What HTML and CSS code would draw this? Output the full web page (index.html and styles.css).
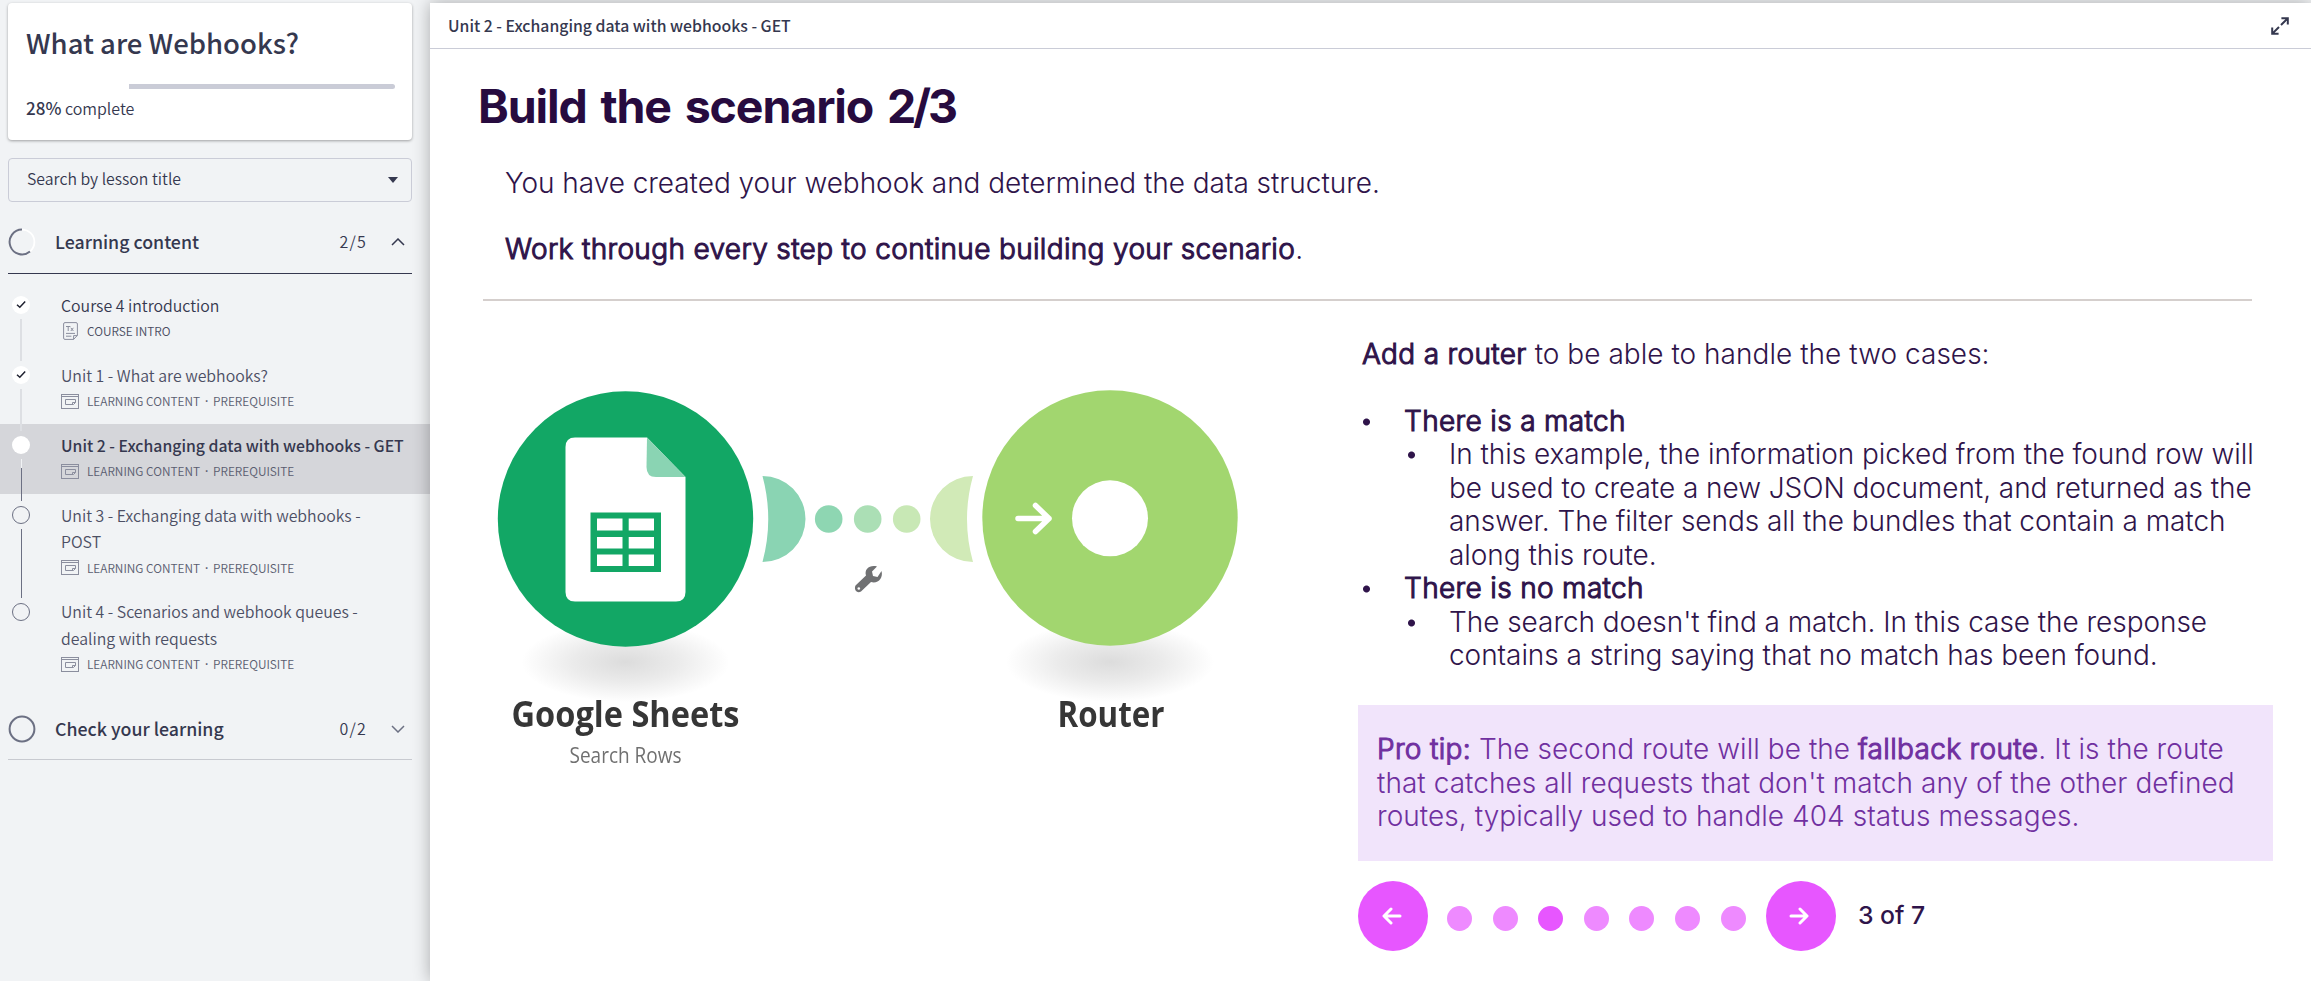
FILE: index.html
```html
<!DOCTYPE html>
<html lang="en">
<head>
<meta charset="utf-8">
<title>What are Webhooks?</title>
<link rel="stylesheet" href="styles.css">
</head>
<body>
<svg class="defs" width="0" height="0" aria-hidden="true">
  <symbol id="lesson" viewBox="0 0 18 15">
    <rect x=".5" y=".5" width="17" height="14" fill="none" stroke="currentColor"/>
    <path d="M.5 2.5H17.5" stroke="currentColor"/>
    <path d="M4.500 5.500H14.500V8.500L12.500 10.500H4.500Z" fill="none" stroke="currentColor"/>
    <path d="M11.500 10.500V8.500H14.500" fill="none" stroke="currentColor"/>
  </symbol>
  <symbol id="check" viewBox="0 0 18 18">
    <path d="M5 8.800L7.800 11.200L13.200 5.400" fill="none" stroke="#1f2130" stroke-width="1.5"/>
  </symbol>
</svg>
<div class="app">
  <aside class="sidebar">
    <section class="card">
      <h1 class="course">What are Webhooks?</h1>
      <div class="progress"><div class="rest"></div></div>
      <p class="pct"><b>28%</b> complete</p>
    </section>
    <div class="search"><span class="hint">Search by lesson title</span><i class="caret"></i></div>
    <div class="section open">
      <svg class="ring" viewBox="0 0 28 28"><circle cx="14" cy="14" r="12.4" fill="none" stroke="#fff" stroke-width="1.8"/><path d="M14 1.6A12.4 12.4 0 1 0 22 23.5" fill="none" stroke="#6c7083" stroke-width="2"/></svg>
      <span class="name">Learning content</span><span class="count">2/5</span>
      <svg class="chev" viewBox="0 0 14 8"><path d="M1 7L7 1L13 7" fill="none" stroke="#35384f" stroke-width="1.5"/></svg>
    </div>
    <ul class="lessons">
      <li class="lesson">
        <div class="rail"><svg class="dot done"><use href="#check"/></svg><i class="line light"></i></div>
        <div class="body"><div class="title dark">Course 4 introduction</div>
          <div class="meta dark"><svg class="doc" viewBox="0 0 15 18"><path d="M2 .6H13Q14.4 .6 14.4 2V13.4L10.6 17.4H2Q.6 17.4 .6 16V2Q.6 .6 2 .6Z M14.4 13.6H10.6V17.4 M3 11.4H12 M3 14.2H8.4 M3 4.5H7.4 M5.2 4.5V9 M7.8 5.8L10.4 9 M10.4 5.8L7.8 9" fill="none" stroke="currentColor" stroke-width="1"/></svg><span>COURSE INTRO</span></div></div>
      </li>
      <li class="lesson">
        <div class="rail"><svg class="dot done"><use href="#check"/></svg><i class="line light"></i></div>
        <div class="body"><div class="title">Unit 1 - What are webhooks?</div>
          <div class="meta"><svg class="ico"><use href="#lesson"/></svg><span>LEARNING CONTENT</span><span class="sep">·</span><span>PREREQUISITE</span></div></div>
      </li>
      <li class="lesson current">
        <div class="rail"><i class="dot done"></i><i class="line"></i></div>
        <div class="body"><div class="title">Unit 2 - Exchanging data with webhooks - GET</div>
          <div class="meta"><svg class="ico"><use href="#lesson"/></svg><span>LEARNING CONTENT</span><span class="sep">·</span><span>PREREQUISITE</span></div></div>
      </li>
      <li class="lesson long">
        <div class="rail"><i class="dot todo"></i><i class="line"></i></div>
        <div class="body"><div class="title">Unit 3 - Exchanging data with webhooks -<br>POST</div>
          <div class="meta"><svg class="ico"><use href="#lesson"/></svg><span>LEARNING CONTENT</span><span class="sep">·</span><span>PREREQUISITE</span></div></div>
      </li>
      <li class="lesson long">
        <div class="rail"><i class="dot todo"></i></div>
        <div class="body"><div class="title">Unit 4 - Scenarios and webhook queues -<br>dealing with requests</div>
          <div class="meta"><svg class="ico"><use href="#lesson"/></svg><span>LEARNING CONTENT</span><span class="sep">·</span><span>PREREQUISITE</span></div></div>
      </li>
    </ul>
    <div class="section closed">
      <svg class="ring" viewBox="0 0 28 28"><circle cx="14" cy="14" r="12.4" fill="none" stroke="#6c7083" stroke-width="2"/></svg>
      <span class="name">Check your learning</span><span class="count">0/2</span>
      <svg class="chev" viewBox="0 0 14 8"><path d="M1 1L7 7L13 1" fill="none" stroke="#6c7083" stroke-width="1.5"/></svg>
    </div>
  </aside>
  <main class="main">
    <header class="bar"><span>Unit 2 - Exchanging data with webhooks - GET</span>
      <svg class="expand" viewBox="0 0 18 18"><path d="M10 8L16.4 1.6M10.4 1.2H16.8V7.6M8 10L1.6 16.4M1.2 10.4V16.8H7.6" fill="none" stroke="#35384f" stroke-width="2"/></svg>
    </header>
    <article class="slide">
      <h2 class="heading">Build the scenario <span class="part">2/3</span></h2>
      <p class="lead">You have created your webhook and determined the data structure.</p>
      <p class="lead second"><b>Work through every step to continue building your scenario</b>.</p>
      <div class="rule"></div>
      <div class="columns">
        <svg class="diagram" viewBox="483 370 800 420">
          <defs>
            <radialGradient id="shade"><stop offset="0" stop-color="#dcdcdc"/><stop offset=".5" stop-color="#ebebeb"/><stop offset="1" stop-color="#fff"/></radialGradient>
          </defs>
          <ellipse cx="625.5" cy="662" rx="104" ry="40" fill="url(#shade)"/>
          <ellipse cx="1110" cy="662" rx="104" ry="40" fill="url(#shade)"/>
          <circle cx="625.5" cy="519" r="127.7" fill="#12a765"/>
          <path d="M575 437.5H647L685.5 477V592Q685.5 601.5 676 601.5H575Q565.500 601.500 565.500 592V447Q565.500 437.500 575 437.500Z" fill="#fff"/>
          <path d="M647 437.500L685.500 477H656Q646.500 477 646.500 467Z" fill="#8ad4b3"/>
          <rect x="590.500" y="512.500" width="70.500" height="59.500" fill="#12a765"/>
          <path d="M597 518.500h25.500v12h-25.500z M628.700 518.500h25.300v12h-25.300z M597 537h25.500v11.500h-25.500z M628.700 537h25.300v11.500h-25.300z M597 554.500h25.500v11.500h-25.500z M628.700 554.500h25.300v11.500h-25.300z" fill="#fff"/>
          <path d="M762.500 476A43 43 0 0 1 762.500 562Q774 519 762.500 476Z" fill="#8ad4b3"/>
          <circle cx="828.700" cy="519" r="13.800" fill="#8ed6b2"/>
          <circle cx="867.700" cy="519" r="13.800" fill="#abdfb5"/>
          <circle cx="906.700" cy="519" r="13.800" fill="#c8e8b5"/>
          <path d="M973 476A43 43 0 0 0 973 562Q961 519 973 476Z" fill="#d1eab7"/>
          <circle cx="1110" cy="518" r="127.700" fill="#a2d66f"/>
          <circle cx="1110" cy="518.300" r="38" fill="#fff"/>
          <path d="M1018 518.500H1049M1035.500 505.500L1049 518.500L1035.500 531.500" fill="none" stroke="#fff" stroke-width="5.500" stroke-linecap="round" stroke-linejoin="round"/>
          <path d="M855.500 585.500L866 575.500C864 569 870 564.500 877 566.500L872 571.500L873 576L877.500 577L881.500 571C883.500 578 878 584 871 582L861 591.500C857 594 853.500 589.500 855.500 585.500Z" fill="#707173"/>
          <circle cx="858.800" cy="588.500" r="1.300" fill="#fff"/>
          <text class="cap" x="625.500" y="726.500" textLength="228" lengthAdjust="spacingAndGlyphs">Google Sheets</text>
          <text class="sub" x="625.500" y="763" textLength="112" lengthAdjust="spacingAndGlyphs">Search Rows</text>
          <text class="cap" x="1111" y="726.500" textLength="107" lengthAdjust="spacingAndGlyphs">Router</text>
        </svg>
        <div class="text">
          <p class="intro"><b>Add a router</b> to be able to handle the two cases:</p>
          <ul class="cases">
            <li><b>There is a match</b>
              <ul><li>In this example, the information picked from the found row will<br>be used to create a new JSON document, and returned as the<br>answer. The filter sends all the bundles that contain a match<br>along this route.</li></ul></li>
            <li><b>There is no match</b>
              <ul><li>The search doesn't find a match. In this case the response<br>contains a string saying that no match has been found.</li></ul></li>
          </ul>
          <div class="tip"><b>Pro tip:</b> The second route will be the <b>fallback route</b>. It is the route<br>that catches all requests that don't match any of the other defined<br>routes, typically used to handle 404 status messages.</div>
          <nav class="pager">
            <span class="btn"><svg viewBox="0 0 20 18"><path d="M18 9H2.500M9 2L2 9L9 16" /></svg></span>
            <span class="pip"></span><span class="pip"></span><span class="pip on"></span><span class="pip"></span><span class="pip"></span><span class="pip"></span><span class="pip"></span>
            <span class="btn"><svg viewBox="0 0 20 18"><path d="M2 9H17.500M11 2L18 9L11 16" /></svg></span>
            <span class="pos">3 of 7</span>
          </nav>
        </div>
      </div>
    </article>
  </main>
</div>
</body>
</html>
```
FILE: styles.css
```css
* { box-sizing: border-box; }
body { margin: 0; background: #f1f3f5; color: #35384f; font-family: "Noto Sans CJK SC", sans-serif; font-size: 16px; }
h1, h2, p, ul { margin: 0; padding: 0; }
ul { list-style: none; }
.defs { position: absolute; }
.app { display: flex; height: 981px; overflow: hidden; padding-top: 3px; }

/* sidebar */
.sidebar { width: 430px; flex: none; }
.card { margin: 0 18px 0 8px; height: 137px; padding: 20px 17px 0 18px; background: #fff; border-radius: 4px; box-shadow: 0 1px 3px rgba(0, 0, 0, .35); }
.course { font-size: 27.500px; line-height: 38px; font-weight: 500; }
.progress { height: 5px; margin-top: 23px; }
.rest { height: 5px; width: 266px; margin-left: auto; background: #caccd7; border-radius: 0 3px 3px 0; }
.pct { font-size: 16px; line-height: 24px; margin-top: 7px; font-weight: 350; }
.pct b { font-weight: 500; font-size: 17px; }
.search { margin: 18px 18px 0 8px; height: 44px; padding: 0 13px 0 18px; border: 1px solid #caccd7; border-radius: 4px; display: flex; align-items: center; justify-content: space-between; font-size: 15.800px; font-weight: 350; }
.hint { line-height: 24px; padding-bottom: 3px; }
.caret { border: 5px solid transparent; border-top: 6px solid #35384f; border-bottom: 0; }
.section { margin: 0 18px 0 8px; display: flex; align-items: center; border-bottom: 1px solid #35384f; }
.open { height: 72px; padding-top: 9px; }
.closed { height: 73px; border-color: #c8cad0; padding-top: 11px; }
.ring { width: 28px; height: 28px; }
.name { font-size: 17.750px; font-weight: 500; line-height: 28px; margin-left: 19px; flex: 1; padding-bottom: 2px; }
.count { font-size: 16px; letter-spacing: 1.200px; margin-right: 24px; font-weight: 350; padding-bottom: 2px; }
.chev { width: 14px; height: 8px; margin-right: 7px; }
.lessons { padding-top: 10px; }
.lesson { display: flex; height: 70px; padding: 8.500px 0 11px 12px; }
.lesson.long { height: 96.500px; }
.current { background: #d5d6da; }
.rail { width: 18px; flex: none; display: flex; flex-direction: column; align-items: center; margin-right: 31px; padding-top: 3.500px; margin-bottom: -22px; }
.dot { width: 18px; height: 18px; border-radius: 50%; flex: none; }
.done { background: #fff; }
.todo { border: 1px solid #6c7083; }
.line { width: 1px; background: #6c7083; flex: 1; margin: 5px 0 4px; }
.light { width: 2px; background: #dddfe3; }
.current .line { background: linear-gradient(#f1f3f5 9px, #6c7083 9px); }
.title { font-size: 15.870px; line-height: 26.500px; white-space: nowrap; color: #4c4f64; font-weight: 350; }
.title.dark { color: #35384f; }
.current .title { font-weight: 500; color: #35384f; font-size: 15.800px; }
.meta { display: flex; align-items: center; height: 24px; font-size: 11.870px; line-height: 24px; color: #5a5d70; font-weight: 350; }
.meta.dark { color: #4a4d62; }
.sep { width: 13px; text-align: center; font-family: "Open Sans", sans-serif; font-weight: 600; }
.ico { width: 18px; height: 15px; margin-right: 8px; color: #8b8e9e; }
.doc { width: 15px; height: 18px; margin: 0 9px 0 2px; color: #8b8e9e; }

/* lesson viewer */
.main { flex: 1; min-width: 0; background: #fff; box-shadow: 0 0 16px rgba(0, 0, 0, .3); }
.bar { height: 46px; border-bottom: 1px solid #caccd7; padding: 0 22px 0 18px; display: flex; align-items: center; justify-content: space-between; font-weight: 500; font-size: 15.800px; line-height: 26px; }
.expand { width: 18px; height: 18px; }
.slide { padding: 33px 38px 0 53px; font-family: Inter, sans-serif; color: #2f144a; font-weight: 300; font-size: 28px; line-height: 33.480px; letter-spacing: -.04px; }
.slide b { font-weight: 300; letter-spacing: .34px; -webkit-text-stroke: 1.100px currentColor; }
.heading { font-size: 46.500px; line-height: 48px; font-weight: 700; color: #270b3f; margin-left: -5px; letter-spacing: -1.100px; word-spacing: 3.800px; }
.part { letter-spacing: -3.200px; }
.lead { margin: 36.500px 0 0 22px; }
.second { margin-top: 33px; padding-bottom: 32.500px; }
.rule { height: 2px; margin-right: 21px; background: #d5cfcd; }
.columns { display: flex; }
.diagram { width: 800px; height: 420px; margin: 69px 75px 0 0; flex: none; filter: blur(.5px); }
.cap { font: 700 35px "Open Sans", sans-serif; fill: #363636; text-anchor: middle; letter-spacing: 0; }
.sub { font: 400 21px "Open Sans", sans-serif; fill: #707070; text-anchor: middle; letter-spacing: 0; }
.text { width: 915px; flex: none; padding-top: 37px; white-space: nowrap; }
.intro { margin-left: 4px; letter-spacing: .03px; }
.cases { margin: 33.500px 0 0 4px; }
.cases li { padding-left: 42px; background: radial-gradient(circle at 4.500px 17px, #2f144a 3px, transparent 4px); }
.cases li li { padding-left: 45px; letter-spacing: -.05px; background: radial-gradient(circle at 7.500px 17px, #2f144a 3px, transparent 4px); }
.tip { margin-top: 32.200px; height: 156px; padding: 28px 19px; background: #f1e4fb; color: #7030a0; letter-spacing: .05px; }
.pager { display: flex; align-items: center; margin-top: 20px; }
.btn { width: 70px; height: 70px; border-radius: 50%; background: #e756ff; display: flex; align-items: center; justify-content: center; }
.btn svg { width: 20px; height: 18px; margin-right: 3px; fill: none; stroke: #fff; stroke-width: 3px; stroke-linecap: round; stroke-linejoin: round; }
.pip { width: 25px; height: 25px; border-radius: 50%; background: #ee8aff; margin: 4px 0 0 20.600px; }
.pip:nth-child(2) { margin-left: 19px; }
.pip.on { background: #e756ff; }
.pip + .btn { margin-left: 20.400px; }
.pos { font-size: 24.800px; font-weight: 500; margin-left: 22px; }
```
